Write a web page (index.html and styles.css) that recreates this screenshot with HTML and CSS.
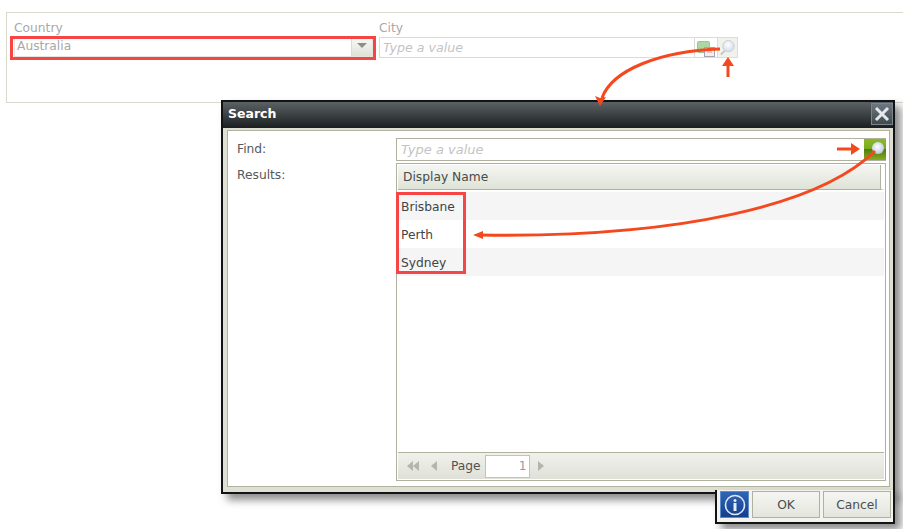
FILE: index.html
```
<!DOCTYPE html>
<html lang="en">
<head>
<meta charset="utf-8">
<title>Search</title>
<link rel="stylesheet" href="styles.css">
</head>
<body>
<section class="form">
  <div class="field country">
    <label class="field-label">Country</label>
    <div class="combo">
      <span class="combo-value">Australia</span>
      <span class="combo-btn"><svg width="10" height="6" viewBox="0 0 10 6"><path d="M0 0h10L5 5z" fill="#8d8f88"/></svg></span>
    </div>
  </div>
  <div class="field city">
    <label class="field-label">City</label>
    <div class="picker">
      <span class="picker-value">Type a value</span>
      <span class="picker-btn">
        <svg width="22" height="20" viewBox="0 0 22 20"><rect x="2.500" y="3.500" width="12" height="11" rx="1" fill="#a9d8a3" stroke="#9cc596"/><rect x="9.500" y="9.500" width="10" height="9" fill="#efefef" stroke="#a5a5ad"/><path d="M12 14h5" stroke="#d89a9a"/></svg>
      </span>
      <span class="picker-btn search-btn">
        <svg width="20" height="20" viewBox="0 0 20 20"><defs><radialGradient id="lens" cx=".45" cy=".4" r=".6"><stop offset="0" stop-color="#fff"/><stop offset="1" stop-color="#cfdcea"/></radialGradient></defs><path d="M7 13l-4 4" stroke="#c6c6be" stroke-width="2"/><circle cx="11" cy="8" r="6" fill="url(#lens)" stroke="#c8cfd6"/></svg>
      </span>
    </div>
  </div>
</section>

<section class="dialog">
  <header class="dialog-title">
    <h1 class="dialog-heading">Search</h1>
    <span class="dialog-close"><svg width="16" height="16" viewBox="0 0 16 16"><path d="M2 2l12 12M14 2L2 14" stroke="#e6e9ec" stroke-width="3"/></svg></span>
  </header>
  <div class="dialog-body">
    <div class="labels">
      <div class="row-label find-label">Find:</div>
      <div class="row-label">Results:</div>
    </div>
    <div class="main">
      <div class="find">
        <span class="find-value">Type a value</span>
        <span class="find-btn">
          <svg width="20" height="20" viewBox="0 0 20 20"><defs><radialGradient id="lens2" cx=".45" cy=".4" r=".6"><stop offset="0" stop-color="#fff"/><stop offset="1" stop-color="#b9c9e0"/></radialGradient></defs><circle cx="13" cy="8" r="6" fill="url(#lens2)"/></svg>
        </span>
      </div>
      <div class="grid">
        <div class="grid-head"><span class="grid-col">Display Name</span></div>
        <div class="grid-rows">
          <div class="grid-row alt">Brisbane</div>
          <div class="grid-row">Perth</div>
          <div class="grid-row alt">Sydney</div>
        </div>
        <div class="pager">
          <svg class="pg-icon" width="14" height="12" viewBox="0 0 14 12"><path d="M7 1v10L1 6zM13 1v10L7 6z" fill="#b4b6ae"/></svg>
          <svg class="pg-icon prev" width="8" height="12" viewBox="0 0 8 12"><path d="M7 1v10L1 6z" fill="#b4b6ae"/></svg>
          <span class="pg-label">Page</span>
          <span class="pg-input">1</span>
          <svg class="pg-icon" width="8" height="12" viewBox="0 0 8 12"><path d="M1 1v10l6-5z" fill="#b4b6ae"/></svg>
        </div>
      </div>
    </div>
  </div>
</section>

<footer class="actions">
  <span class="info-btn"><svg width="22" height="22" viewBox="0 0 22 22"><circle cx="11" cy="11" r="9.500" fill="none" stroke="#dfe8f5" stroke-width="1.600"/><circle cx="11" cy="6.500" r="1.500" fill="#e8eef8"/><rect x="9.500" y="9" width="3" height="8" fill="#e8eef8"/></svg></span>
  <span class="action-btn ok">OK</span>
  <span class="action-btn cancel">Cancel</span>
</footer>

<svg class="marks" width="903" height="529" viewBox="0 0 903 529">
  <g fill="none" stroke="#f4481f" stroke-width="3">
    <path d="M720 49C660 51 612 70 602 98"/>
    <path d="M728 77V63"/>
    <path d="M837 149H853"/>
    <path d="M875 151C820 205 680 238 480 235" stroke-width="3"/>
  </g>
  <g fill="#f4481f">
    <path d="M600 106l-5-10 5 2 6-1z"/>
    <path d="M728 57l-6 9h12z"/>
    <path d="M860 149l-9-6v12z"/>
    <path d="M473 235l10-4v8z"/>
  </g>
  <g fill="none" stroke="#f54545" stroke-width="3">
    <rect x="11.500" y="37.500" width="363" height="21"/>
    <rect x="397.500" y="193.500" width="67" height="79"/>
  </g>
</svg>
</body>
</html>
```
FILE: styles.css
```
* { box-sizing: border-box; }
html, body { margin: 0; padding: 0; }
body {
  width: 903px;
  height: 529px;
  overflow: hidden;
  background: #fff;
  font: 12.25px "DejaVu Sans", Verdana, sans-serif;
  color: #4a4e50;
  padding-top: 12px;
}
.form {
  margin-left: 6px;
  height: 91px;
  border: 1px solid #d8d8cc;
  border-width: 1px 0 1px 1px;
  display: flex;
  padding: 8px 0 0 7px;
  gap: 6px;
}
.field-label { display: block; color: #a9a9a9; line-height: 14px; margin-bottom: 2px; }
.country { width: 359px; }
.combo {
  height: 20px;
  display: flex;
  background: #fff;
  border: 1px solid #e4e4dc;
}
.combo-value { flex: 1; color: #a8a8a8; padding-left: 2px; line-height: 16px; }
.combo-btn {
  width: 21px;
  display: flex;
  align-items: center;
  justify-content: center;
  padding-bottom: 3px;
  background: linear-gradient(#f8f9f5, #dfe2d9);
  border-left: 1px solid #dcdcd4;
}
.city { width: 359px; }
.picker {
  display: flex;
  height: 21px;
  border: 1px solid #dcdcd2;
  border-right: 0;
}
.picker-value, .find-value {
  flex: 1;
  font-style: italic;
  font-size: 13px;
  color: #c4c4c4;
  padding-left: 4px;
  line-height: 20px;
}
.picker-value { font-size: 12.6px; padding-left: 3px; }
.picker-btn {
  width: 23px;
  display: flex;
  align-items: center;
  justify-content: center;
  border-left: 1px solid #dcdcd2;
}
.search-btn {
  width: 21px;
  background: #f1f2ec;
  border-right: 1px solid #dcdcd2;
}
.dialog {
  position: absolute;
  left: 221px;
  top: 100px;
  width: 674px;
  height: 394px;
  border: 2px solid #111315;
  background: #dfdfd3;
  box-shadow: 6px 6px 8px rgba(0, 0, 0, .45);
  display: flex;
  flex-direction: column;
}
.dialog-title {
  height: 26px;
  flex: none;
  display: flex;
  align-items: center;
  justify-content: space-between;
  background: linear-gradient(#5c6164, #1b1f22);
  padding: 0 0 0 5px;
}
.dialog-heading { margin: 0 0 4px; font: bold 12.5px "DejaVu Sans", sans-serif; color: #fff; }
.dialog-close {
  width: 22px;
  height: 22px;
  margin: 0 0 3px;
  display: flex;
  align-items: center;
  justify-content: center;
  background: linear-gradient(#6d7780, #3f4950);
  border: 1px solid #7c858c;
}
.dialog-body {
  flex: 1;
  margin: 2px 3px 5px 4px;
  background: #fff;
  border: 1px solid #b1b19f;
  display: flex;
}
.labels { width: 168px; padding: 10px 0 0 9px; }
.row-label { color: #55595a; line-height: 16px; }
.find-label { margin-bottom: 10px; }
.main { width: 490px; padding-top: 7px; display: flex; flex-direction: column; }
.find {
  height: 23px;
  display: flex;
  border: 1px solid #b1b19f;
  border-width: 1px 0 1px 1px;
}
.find-value { line-height: 21px; }
.find-btn {
  width: 22px;
  background: linear-gradient(#8cb928 0, #7aa81c 50%, #4f7d0c 50%, #85ad1f 100%);
  display: flex;
  align-items: center;
  justify-content: center;
}
.grid {
  margin-top: 2px;
  height: 318px;
  border: 1px solid #b1b19f;
  display: flex;
  flex-direction: column;
}
.grid-head {
  height: 25px;
  margin: 1px 1px 0 1px;
  flex: none;
  background: linear-gradient(#f5f6f2, #dfe3d7);
  border-bottom: 1px solid #b1b19f;
  border-right: 3px solid #fff;
  box-shadow: inset -1px 0 0 #b1b19f;
  padding-left: 5px;
  line-height: 24px;
}
.grid-col { color: #474b4c; }
.grid-rows { flex: 1; padding: 2px 1px 0 0; }
.grid-row { height: 28px; line-height: 30px; padding-left: 4px; color: #3f4445; }
.grid-row.alt { background: #f5f5f5; }
.pager {
  height: 27px;
  flex: none;
  display: flex;
  align-items: center;
  background: linear-gradient(#f0f1ec, #dfe1d8);
  border-top: 1px solid #b1b19f;
  margin: 0 1px 1px 1px;
  padding-left: 8px;
}
.pg-icon { flex: none; }
.prev { margin-left: 10px; }
.pg-label { margin: 0 4px 0 13px; color: #4f5354; }
.pg-input {
  width: 45px;
  height: 23px;
  background: #fff;
  border: 1px solid #c4c4b6;
  text-align: right;
  padding-right: 2px;
  line-height: 21px;
  color: #9a9a9a;
  margin-right: 7px;
}
.actions {
  position: absolute;
  left: 715px;
  top: 490px;
  width: 180px;
  height: 34px;
  background: #f4f4ef;
  border: 2px solid #111315;
  border-top-width: 0;
  box-shadow: 6px 6px 8px rgba(0, 0, 0, .45);
  display: flex;
  padding: 1px 2px 4px 3px;
  gap: 3px;
}
.info-btn {
  width: 29px;
  display: flex;
  align-items: center;
  justify-content: center;
  background: linear-gradient(#2f66b4, #123f8f);
  border: 1px solid #5e8ccb;
}
.action-btn {
  display: flex;
  align-items: center;
  justify-content: center;
  background: linear-gradient(#f5f6f2, #e3e5dd);
  border: 1px solid #b1b19f;
  color: #4a4e50;
}
.ok { width: 68px; }
.cancel { width: 68px; }
.marks { position: absolute; left: 0; top: 0; pointer-events: none; }
```
